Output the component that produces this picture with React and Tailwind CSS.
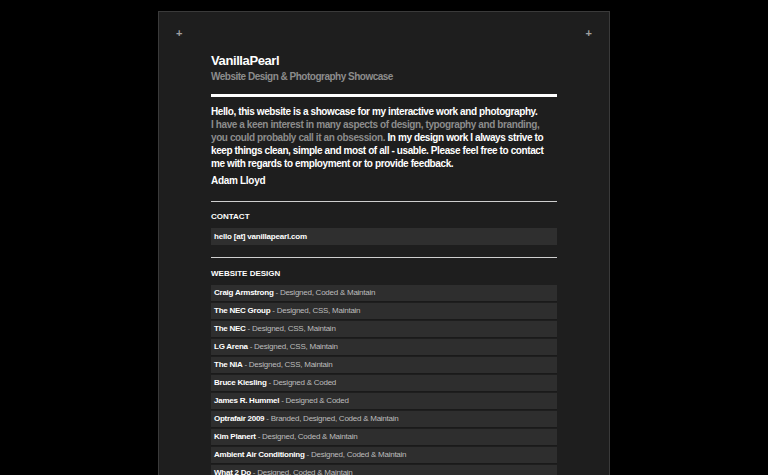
import React from "react";

const projects = [
  ["Craig Armstrong", "Designed, Coded & Maintain"],
  ["The NEC Group", "Designed, CSS, Maintain"],
  ["The NEC", "Designed, CSS, Maintain"],
  ["LG Arena", "Designed, CSS, Maintain"],
  ["The NIA", "Designed, CSS, Maintain"],
  ["Bruce Kiesling", "Designed & Coded"],
  ["James R. Hummel", "Designed & Coded"],
  ["Optrafair 2009", "Branded, Designed, Coded & Maintain"],
  ["Kim Planert", "Designed, Coded & Maintain"],
  ["Ambient Air Conditioning", "Designed, Coded & Maintain"],
  ["What 2 Do", "Designed, Coded & Maintain"],
  ["Sound Agency", "Designed, Coded & Maintain"],
];

const App = () => {
  return (
    <div
      className="w-full h-[475px] overflow-hidden bg-black"
      style={{ fontFamily: '"Liberation Sans", Arial, sans-serif' }}
    >
      <div className="ml-[158px] mt-[11px] w-[452px] min-h-[600px] bg-[#1e1e1e] border border-[#3a3a3a]">
        {/* corner marks */}
        <div className="flex justify-between px-[17px] pt-[14px] text-[#a0a0a0] text-[11px] font-bold leading-[14px]">
          <span>+</span>
          <span>+</span>
        </div>

        <div className="mx-[52px] pt-[13px]">
          {/* header */}
          <h1 className="text-white text-[13px] font-bold leading-[16px] tracking-[-0.4px]">VanillaPearl</h1>
          <p className="text-[#8c8c8c] text-[10px] font-bold leading-[14px] mt-[1px] tracking-[-0.5px]">
            Website Design &amp; Photography Showcase
          </p>
          <div className="h-[3px] bg-white mt-[10px]" />

          {/* intro */}
          <p className="text-white text-[10px] font-bold leading-[13px] mt-[8px] tracking-[-0.4px] whitespace-nowrap">
            Hello, this website is a showcase for my interactive work and photography.
            <br />
            <span className="text-[#8c8c8c]">
              I have a keen interest in many aspects of design, typography and branding,
              <br />
              you could probably call it an obsession.
            </span>{" "}
            In my design work I always strive to
            <br />
            keep things clean, simple and most of all - usable. Please feel free to contact
            <br />
            me with regards to employment or to provide feedback.
          </p>
          <p className="text-white text-[10px] font-bold leading-[13px] mt-[4px] tracking-[-0.3px]">Adam Lloyd</p>

          {/* contact */}
          <div className="h-px bg-[#cfcfcf] mt-[14px]" />
          <h2 className="text-white text-[8px] font-bold uppercase leading-[10px] mt-[10px]">Contact</h2>
          <div className="bg-[#2f2f2f] mt-[6px] h-[17px] px-[3px] flex items-center text-white text-[8px] font-bold tracking-[-0.2px]">
            hello [at] vanillapearl.com
          </div>

          {/* website design */}
          <div className="h-px bg-[#cfcfcf] mt-[12px]" />
          <h2 className="text-white text-[8px] font-bold uppercase leading-[10px] mt-[11px]">Website Design</h2>
          <ul className="mt-[6px] flex flex-col gap-px">
            {projects.map(([name, role]) => (
              <li
                key={name}
                className="h-[17px] px-[3px] flex items-center bg-[#2e2e2e] border-b border-[#1a1a1a] text-[8px] tracking-[-0.25px] whitespace-nowrap"
              >
                <span className="text-white font-bold">{name}</span>
                <span className="text-[#bdbdbd]">&nbsp;- {role}</span>
              </li>
            ))}
          </ul>
        </div>
      </div>
    </div>
  );
};

export default App;
